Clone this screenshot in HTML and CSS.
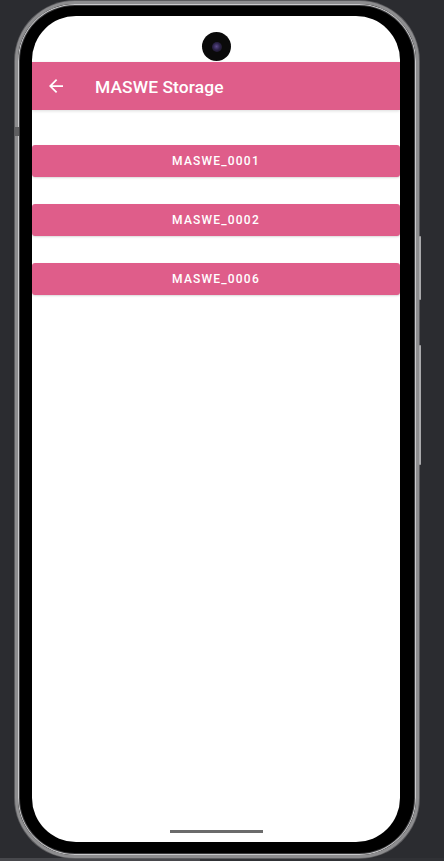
FILE: index.html
```html
<!DOCTYPE html>
<html>
<head>
<meta charset="utf-8">
<link rel="stylesheet" href="styles.css">
</head>
<body>
<div class="stage">
  <div class="phone">
    <span class="side-btn side-btn-1"></span>
    <span class="side-btn side-btn-2"></span>
    <span class="side-mark"></span>
    <div class="screen">
      <div class="status"></div>
      <span class="camera"><span class="lens"></span></span>
      <header class="appbar">
        <svg class="back" viewBox="4 4 16 16" width="14" height="14"><path d="M20 11H7.83l5.59-5.59L12 4l-8 8 8 8 1.41-1.41L7.83 13H20v-2z" fill="#fff"/></svg>
        <h1 class="title">MASWE Storage</h1>
      </header>
      <main class="list">
        <button class="item">MASWE_0001</button>
        <button class="item">MASWE_0002</button>
        <button class="item">MASWE_0006</button>
      </main>
      <div class="home-bar"></div>
    </div>
  </div>
  <div class="bottom-strip"><span class="strip-light"></span></div>
</div>
</body>
</html>
```
FILE: styles.css
```css
html, body {
  margin: 0;
  padding: 0;
  background: #2b2c30;
  width: 444px;
  height: 861px;
  overflow: hidden;
}
.stage {
  display: flex;
  flex-direction: column;
  height: 861px;
}
.phone {
  position: relative;
  margin: 1px 0 0 15px;
  width: 404px;
  height: 857px;
  box-sizing: border-box;
  border-radius: 60px;
  border: 3px solid #8d8d8f;
  box-shadow: inset 0 0 0 1px #c9c9cb, inset 0 0 0 2px #3a3a3c, 0 0 0 1px #5b5b5e;
  background: #000;
  padding: 12px 14px 13px 14px;
}
.side-btn {
  position: absolute;
  right: -5px;
  width: 2px;
  background: #a9a9ab;
  border-radius: 1px;
}
.side-btn-1 { top: 232px; height: 64px; }
.side-btn-2 { top: 341px; height: 120px; }
.side-mark {
  position: absolute;
  left: -3px;
  top: 123px;
  width: 4px;
  height: 9px;
  background: #5e5e60;
}
.screen {
  position: relative;
  width: 368px;
  height: 826px;
  background: #fff;
  border-radius: 44px;
  overflow: hidden;
  display: flex;
  flex-direction: column;
}
.status {
  height: 46px;
  flex: none;
}
.camera {
  position: absolute;
  left: 170px;
  top: 16px;
  width: 29px;
  height: 29px;
  border-radius: 50%;
  background: #0a0a0a;
  display: flex;
  align-items: center;
  justify-content: center;
}
.lens {
  width: 10px;
  height: 10px;
  border-radius: 50%;
  background: radial-gradient(circle at 45% 45%, #5b4a8a 0, #2a2148 45%, #111 100%);
}
.appbar {
  flex: none;
  height: 48px;
  background: #df5d8a;
  display: flex;
  align-items: center;
  box-shadow: 0 1px 3px rgba(0,0,0,0.14);
  position: relative;
  z-index: 1;
}
.back {
  margin-left: 17px;
  flex: none;
}
.title {
  margin: 0 0 0 32px;
  font-family: Roboto, "Noto Sans", sans-serif;
  font-weight: 500;
  font-size: 17.4px;
  color: #fff;
  letter-spacing: 0.1px;
  position: relative;
  top: 1px;
}
.list {
  display: flex;
  flex-direction: column;
  gap: 27px;
  padding-top: 35px;
  flex: 1;
}
.item {
  height: 32px;
  width: 100%;
  border: none;
  margin: 0;
  padding: 0;
  border-radius: 3px;
  background: #df5d8a;
  color: #fff;
  font-family: Roboto, "Noto Sans", sans-serif;
  font-weight: 500;
  font-size: 12px;
  letter-spacing: 1.2px;
  box-shadow: 0 1px 2px rgba(0,0,0,0.15);
}
.home-bar {
  position: absolute;
  left: 138px;
  bottom: 9px;
  width: 93px;
  height: 3px;
  background: #6b6b6b;
}
.bottom-strip {
  margin-top: 0;
  height: 3px;
  background: #303135;
  display: flex;
}
.strip-light {
  width: 200px;
  background: #47484c;
}
```
